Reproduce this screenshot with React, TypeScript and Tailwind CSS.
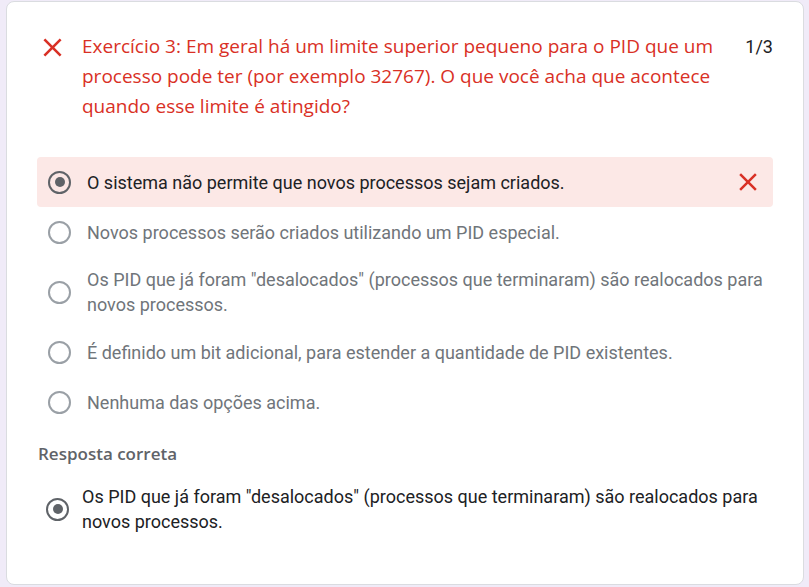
const OPTIONS = [
  { text: 'O sistema não permite que novos processos sejam criados.', chosen: true },
  { text: 'Novos processos serão criados utilizando um PID especial.' },
  {
    text: (
      <>
        Os PID que já foram "desalocados" (processos que terminaram) são realocados para
        <br />
        novos processos.
      </>
    ),
  },
  { text: 'É definido um bit adicional, para estender a quantidade de PID existentes.' },
  { text: 'Nenhuma das opções acima.' },
]

function CrossIcon({ className }: { className?: string }) {
  return (
    <svg viewBox="0 0 24 24" className={className} fill="currentColor">
      <path d="M19 6.41 17.59 5 12 10.59 6.41 5 5 6.41 10.59 12 5 17.59 6.41 19 12 13.41 17.59 19 19 17.59 13.41 12z" />
    </svg>
  )
}

function Radio({ checked }: { checked?: boolean }) {
  return (
    <span
      className={`flex h-[23px] w-[23px] shrink-0 items-center justify-center rounded-full border-[2.5px] ${
        checked ? 'border-[#5f6368]' : 'border-[#9aa0a6]'
      }`}
    >
      {checked && <span className="h-[10px] w-[10px] rounded-full bg-[#5f6368]" />}
    </span>
  )
}

export default function App() {
  return (
    <div className="min-h-screen bg-[#f0ebf8] pl-[6px] pt-[1px]" style={{ fontFamily: 'Roboto, "Liberation Sans", sans-serif' }}>
      <div className="h-[584px] w-[798px] rounded-lg border border-[#dadce0] bg-white px-[30px] pt-[29px]">
        {/* cabeçalho da questão */}
        <div className="flex items-start">
          <CrossIcon className="mt-[1px] h-[31px] w-[31px] shrink-0 text-[#d93025]" />
          <h2
            className="ml-[14px] flex-1 whitespace-nowrap text-[19px] leading-[30px] text-[#d93025]"
            style={{ fontFamily: '"Open Sans", Roboto, sans-serif' }}
          >
            Exercício 3: Em geral há um limite superior pequeno para o PID que um
            <br />
            processo pode ter (por exemplo 32767). O que você acha que acontece
            <br />
            quando esse limite é atingido?
          </h2>
          <span className="ml-4 pt-[1px] text-[18px] leading-[30px] text-[#202124]">1/3</span>
        </div>

        {/* alternativas */}
        <div className="mt-[36px]">
          {OPTIONS.map((o, i) => (
            <div
              key={i}
              className={`flex min-h-[50px] items-center rounded py-[10px] pl-[11px] pr-[10px] ${o.chosen ? 'bg-[#fce8e6]' : ''}`}
            >
              <Radio checked={o.chosen} />
              <span
                className={`ml-[16px] flex-1 whitespace-nowrap text-[18px] leading-[25px] ${
                  o.chosen ? 'text-[#202124]' : 'text-[#70757a]'
                }`}
              >
                {o.text}
              </span>
              {o.chosen && <CrossIcon className="h-[30px] w-[30px] shrink-0 text-[#d93025]" />}
            </div>
          ))}
        </div>

        <p
          className="mt-[15px] pl-[1px] text-[17px] font-semibold leading-[24px] text-[#5f6368]"
          style={{ fontFamily: '"Open Sans", Roboto, sans-serif' }}
        >
          Resposta correta
        </p>

        <div className="mt-[18px] flex items-center pl-[9px]">
          <Radio checked />
          <span className="ml-[13px] whitespace-nowrap text-[18px] leading-[25px] text-[#202124]">
            Os PID que já foram "desalocados" (processos que terminaram) são realocados para
            <br />
            novos processos.
          </span>
        </div>
      </div>
    </div>
  )
}
